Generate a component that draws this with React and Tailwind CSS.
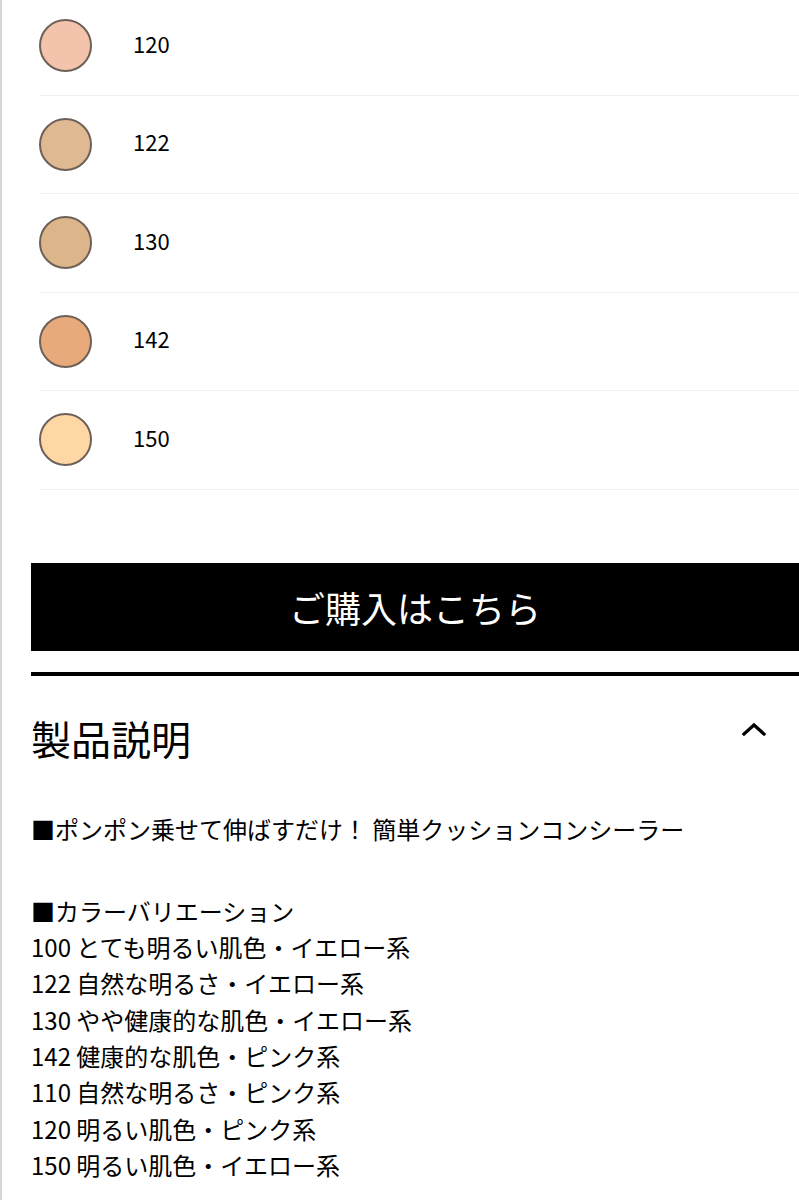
const shades = [
  { code: '120', color: '#f3c4ab' },
  { code: '122', color: '#dfb991' },
  { code: '130', color: '#ddb58a' },
  { code: '142', color: '#e8aa7b' },
  { code: '150', color: '#fed7a5' },
]

const variations = [
  '100 とても明るい肌色・イエロー系',
  '122 自然な明るさ・イエロー系',
  '130 やや健康的な肌色・イエロー系',
  '142 健康的な肌色・ピンク系',
  '110 自然な明るさ・ピンク系',
  '120 明るい肌色・ピンク系',
  '150 明るい肌色・イエロー系',
]

function ChevronUp() {
  return (
    <svg width="26" height="16" viewBox="0 0 26 16" fill="none">
      <polyline points="3,13 13,4 23,13" stroke="#000" strokeWidth="3.2" strokeLinecap="square" />
    </svg>
  )
}

export default function App() {
  return (
    <div
      className="min-h-[1200px] w-[799px] overflow-hidden border-l-2 border-[#d6d6d6] bg-white text-black"
      style={{ fontFamily: '"Noto Sans CJK JP", "Noto Sans", sans-serif' }}
    >
      {/* shade list */}
      <div className="-mt-[3px] ml-[37px]">
        {shades.map((s) => (
          <div
            key={s.code}
            className="flex h-[98.5px] items-center border-b border-[#efefef]"
          >
            <div
              className="h-[53px] w-[53px] shrink-0 rounded-full border-2 border-[#6d6058]"
              style={{ backgroundColor: s.color }}
            />
            <span className="-mt-[6px] ml-[41px] text-[22px] leading-none">{s.code}</span>
          </div>
        ))}
      </div>

      <div className="ml-[29px]">
        {/* purchase button */}
        <button className="mt-[73px] flex h-[88px] w-full items-center justify-center bg-black text-[36px] leading-none text-white">
          ご購入はこちら
        </button>

        <div className="mt-[21px] h-[4px] w-full bg-black" />

        {/* description heading */}
        <div className="mt-[32px] flex h-[60px] items-center justify-between pr-[32px]">
          <h2 className="text-[40px] leading-none font-normal">製品説明</h2>
          <div className="-mt-[18px]">
            <ChevronUp />
          </div>
        </div>

        {/* description body */}
        <div className="mt-[43px] text-[24px] leading-[36.3px]">
          <p>■ポンポン乗せて伸ばすだけ！ 簡単クッションコンシーラー</p>
          <p className="mt-[46px]">■カラーバリエーション</p>
          {variations.map((v) => (
            <p key={v}>{v}</p>
          ))}
        </div>
      </div>
    </div>
  )
}
